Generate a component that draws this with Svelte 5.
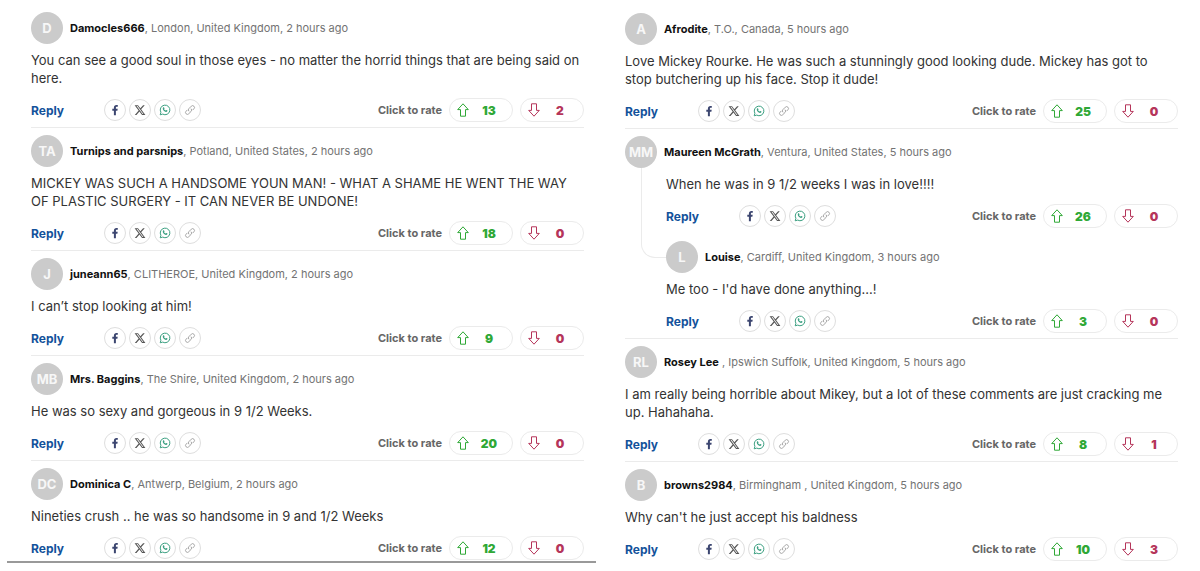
<script lang="ts">
	interface Comment {
		initials: string;
		name: string;
		meta: string;
		text: string;
		up: number;
		down: number;
		replies?: Comment[];
	}

	const columns: Comment[][] = [
		[
			{
				initials: 'D',
				name: 'Damocles666',
				meta: ', London, United Kingdom, 2 hours ago',
				text: 'You can see a good soul in those eyes - no matter the horrid things that are being said on here.',
				up: 13,
				down: 2
			},
			{
				initials: 'TA',
				name: 'Turnips and parsnips',
				meta: ', Potland, United States, 2 hours ago',
				text: 'MICKEY WAS SUCH A HANDSOME YOUN MAN! - WHAT A SHAME HE WENT THE WAY OF PLASTIC SURGERY - IT CAN NEVER BE UNDONE!',
				up: 18,
				down: 0
			},
			{
				initials: 'J',
				name: 'juneann65',
				meta: ', CLITHEROE, United Kingdom, 2 hours ago',
				text: 'I can’t stop looking at him!',
				up: 9,
				down: 0
			},
			{
				initials: 'MB',
				name: 'Mrs. Baggins',
				meta: ', The Shire, United Kingdom, 2 hours ago',
				text: 'He was so sexy and gorgeous in 9 1/2 Weeks.',
				up: 20,
				down: 0
			},
			{
				initials: 'DC',
				name: 'Dominica C',
				meta: ', Antwerp, Belgium, 2 hours ago',
				text: 'Nineties crush .. he was so handsome in 9 and 1/2 Weeks',
				up: 12,
				down: 0
			}
		],
		[
			{
				initials: 'A',
				name: 'Afrodite',
				meta: ', T.O., Canada, 5 hours ago',
				text: 'Love Mickey Rourke. He was such a stunningly good looking dude. Mickey has got to stop butchering up his face. Stop it dude!',
				up: 25,
				down: 0
			},
			{
				initials: 'MM',
				name: 'Maureen McGrath',
				meta: ', Ventura, United States, 5 hours ago',
				text: 'When he was in 9 1/2 weeks I was in love!!!!',
				up: 26,
				down: 0,
				replies: [
					{
						initials: 'L',
						name: 'Louise',
						meta: ', Cardiff, United Kingdom, 3 hours ago',
						text: "Me too - I'd have done anything...!",
						up: 3,
						down: 0
					}
				]
			},
			{
				initials: 'RL',
				name: 'Rosey Lee',
				meta: ' , Ipswich Suffolk, United Kingdom, 5 hours ago',
				text: 'I am really being horrible about Mikey, but a lot of these comments are just cracking me up. Hahahaha.',
				up: 8,
				down: 1
			},
			{
				initials: 'B',
				name: 'browns2984',
				meta: ', Birmingham , United Kingdom, 5 hours ago',
				text: "Why can't he just accept his baldness",
				up: 10,
				down: 3
			}
		]
	];
</script>

{#snippet header(c: Comment)}
	<header>
		<span class="avatar">{c.initials}</span>
		<p class="byline"><strong>{c.name}</strong>{c.meta}</p>
	</header>
{/snippet}

{#snippet content(c: Comment)}
	<p class="text">{c.text}</p>
	<div class="actions">
		<button class="reply">Reply</button>
		<div class="share">
			<button class="facebook" aria-label="Share on Facebook">
				<svg viewBox="0 0 12 12" width="12" height="12">
					<path
						fill="currentColor"
						d="M4.9 11.2V6.7H3.3V4.8h1.6V3.5C4.9 1.8 5.9.9 7.4.9c.6 0 1.1 0 1.4.1v1.7h-.9c-.8 0-1 .4-1 1v1.1h1.8l-.3 1.9H6.9v4.5z"
					/>
				</svg>
			</button>
			<button class="x" aria-label="Share on X">
				<svg viewBox="0 0 24 24" width="12" height="12">
					<path
						fill="currentColor"
						d="M18.2 2.3h3.3l-7.2 8.2 8.5 11.3h-6.7l-5.2-6.9-6 6.9H1.6l7.7-8.9L1.2 2.3H8l4.7 6.2zm-1.1 17.5h1.8L7.1 4.1h-2z"
					/>
				</svg>
			</button>
			<button class="whatsapp" aria-label="Share on WhatsApp">
				<svg viewBox="0 0 12 12" width="12" height="12">
					<path
						fill="none"
						stroke="currentColor"
						d="M1.2 10.8l.7-2.5A4.8 4.8 0 1 1 3.7 10.1z"
					/>
					<path
						fill="currentColor"
						d="M4.3 3.3c.4-.3.7-.1.8.2l.4.9c.1.3-.3.6-.4.8.3.6.8 1.1 1.5 1.4.3-.2.5-.7.8-.6l1 .5c.3.2 0 .9-.3 1.1-.8.6-2 .2-3-.6C4 6.100 3.200 4.300 4.300 3.300z"
					/>
				</svg>
			</button>
			<button class="link" aria-label="Copy link">
				<svg viewBox="0 0 12 12" width="12" height="12" fill="none" stroke="currentColor">
					<path
						d="M5 7.3a2 2 0 0 1 0-2.8l2.3-2.3a1.8 1.8 0 0 1 2.6 2.6L8.600 6.100M7 4.700a2 2 0 0 1 0 2.800L4.700 9.800a1.800 1.800 0 0 1-2.600-2.600l1.300-1.300"
					/>
				</svg>
			</button>
		</div>
		<div class="rate">
			<span>Click to rate</span>
			<button class="up" aria-label="Rate up, {c.up}">
				<svg viewBox="0 0 12 14" width="12" height="14" fill="none" stroke="currentColor">
					<path stroke-linejoin="round" d="M6 .8 11.3 6.6H8.5v6.6h-5V6.6H.7z" />
				</svg>
				<b>{c.up}</b>
			</button>
			<button class="down" aria-label="Rate down, {c.down}">
				<svg viewBox="0 0 12 14" width="12" height="14" fill="none" stroke="currentColor">
					<path stroke-linejoin="round" d="M6 13.2.7 7.4h2.8V.8h5v6.6h2.8z" />
				</svg>
				<b>{c.down}</b>
			</button>
		</div>
	</div>
{/snippet}

<main>
	{#each columns as comments}
		<section>
			{#each comments as c}
				<article class:thread={c.replies}>
					{@render header(c)}
					<div class="body">
						{@render content(c)}
						{#each c.replies ?? [] as r}
							<div class="nested">
								{@render header(r)}
								{@render content(r)}
							</div>
						{/each}
					</div>
				</article>
			{/each}
		</section>
	{/each}
</main>

<style>
	:global(body) {
		margin: 0;
		background: #fff;
	}

	main {
		display: grid;
		grid-template-columns: 589fr 553fr;
		align-items: start;
		gap: 29px;
		padding: 5px 22px 7px 7px;
		font-family: Inter, 'Liberation Sans', sans-serif;
		color: #333;
	}

	section {
		padding-top: 1px;
	}
	section:first-child {
		padding: 0 12px 0 24px;
		border-bottom: 2px solid #999;
	}

	article {
		padding: 7px 0 5px;
		border-bottom: 1px solid #ebebeb;
	}
	article:last-child {
		padding-bottom: 1px;
		border-bottom: 0;
	}

	header {
		display: flex;
		align-items: center;
		gap: 7px;
	}

	.avatar {
		display: grid;
		place-items: center;
		flex: none;
		width: 32px;
		height: 32px;
		border-radius: 50%;
		background: #cbcbcb;
		color: #f7f7f7;
		font-size: 13px;
		font-weight: 700;
	}

	p {
		margin: 0;
	}

	.byline {
		font-size: 11px;
		line-height: 18px;
		color: #737373;
	}
	.byline strong {
		font-weight: 700;
		color: #111;
	}

	.text {
		margin: 7px 0 11px;
		font-size: 13px;
		line-height: 18px;
	}

	.actions,
	.share,
	.rate {
		display: flex;
		align-items: center;
	}

	button {
		display: flex;
		align-items: center;
		box-sizing: border-box;
		padding: 0;
		border: 0;
		background: none;
		font: inherit;
		cursor: pointer;
	}

	.reply {
		width: 73px;
		font-size: 12px;
		font-weight: 700;
		color: #13529b;
	}

	.share {
		gap: 3px;
	}
	.share button {
		justify-content: center;
		width: 22px;
		height: 22px;
		border: 1px solid #dedede;
		border-radius: 50%;
	}
	.share .facebook {
		color: #3c4670;
	}
	.share .x {
		color: #555;
	}
	.share .whatsapp {
		color: #3a9f80;
	}
	.share .link {
		color: #a5a5a5;
	}

	.rate {
		gap: 7px;
		margin-left: auto;
		font-size: 11px;
		font-weight: 700;
		color: #666;
	}
	.rate button {
		gap: 6px;
		width: 64px;
		height: 24px;
		padding-left: 7px;
		border: 1px solid #ebebeb;
		border-radius: 12px;
	}
	.rate b {
		width: 28px;
		font-size: 12px;
		text-align: center;
	}
	.rate .up {
		color: #2fa836;
	}
	.rate .down {
		color: #b5355a;
	}

	.thread {
		position: relative;
	}
	.thread .body {
		padding-left: 41px;
	}
	.nested {
		padding-top: 13px;
	}

	/* Elbow from the parent's avatar to the reply's avatar */
	.thread::before {
		content: '';
		position: absolute;
		top: 39px;
		left: 16px;
		width: 24px;
		height: 89px;
		border: solid #ebebeb;
		border-width: 0 0 1px 1px;
		border-bottom-left-radius: 14px;
	}
</style>
